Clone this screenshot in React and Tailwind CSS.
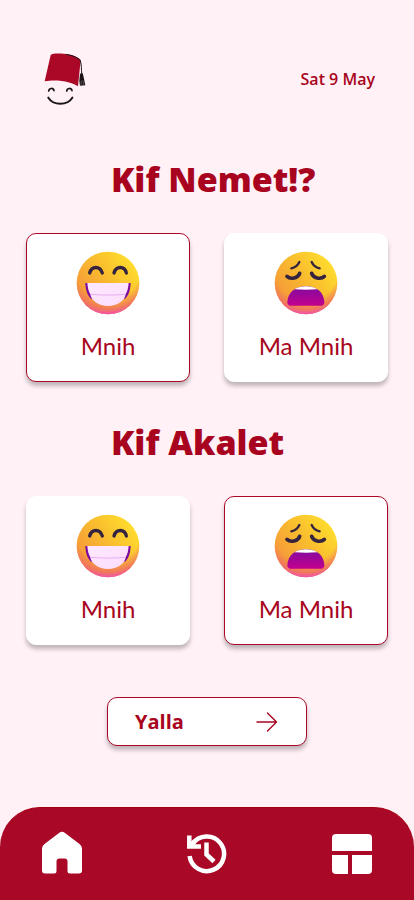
import React, { useState } from 'react';

const TarboushLogo = () => (
  <svg viewBox="36 30 132 174" className="w-11 h-[58px]" fill="none" role="img" aria-label="Smiling tarboush">
    <path d="M62 45 C66 40 84 40 101 41 C122 43 144 49 152 60 L144 139 C130 130 112 124 90 122 C72 120 56 122 44 124 Z" fill="#ab0828" />
    <path d="M108 43 C128 46 146 54 151 62 C155 76 154 88 155 101" stroke="#1c1517" strokeWidth="3" />
    <path d="M150 101 L158 99 L161 112 L166 136 L150 137 L148 122 Z" fill="#1c1517" />
    <path d="M154 122 L153 136 M159 121 L161 135" stroke="#8d8285" strokeWidth="1.5" />
    <path d="M56 153 C58 143 70 143 72 152 M110 153 C112 143 124 143 126 152" stroke="#1c1517" strokeWidth="5" strokeLinecap="round" />
    <path d="M55 173 C70 197 112 197 127 173" stroke="#1c1517" strokeWidth="6" strokeLinecap="round" />
  </svg>
);

const Face = ({ id, children }) => (
  <svg viewBox="0 0 192 192" className="w-16 h-16" fill="none" aria-hidden="true">
    <defs>
      <linearGradient id={`${id}-skin`} x1="0.9" y1="0.1" x2="0.1" y2="0.75">
        <stop offset="0" stopColor="#ffe02e" />
        <stop offset="0.5" stopColor="#f9bc2e" />
        <stop offset="1" stopColor="#f5973a" />
      </linearGradient>
      <radialGradient id={`${id}-blush`} cx="0.5" cy="0.25" r="0.75">
        <stop offset="0.7" stopColor="#ef6a6a" stopOpacity="0" />
        <stop offset="0.9" stopColor="#ef6a6a" stopOpacity="0.8" />
        <stop offset="1" stopColor="#f24fb5" />
      </radialGradient>
      <linearGradient id={`${id}-mouth`} x1="0" y1="0" x2="0" y2="1">
        <stop offset="0" stopColor="#7d0ba0" />
        <stop offset="1" stopColor="#c4008e" />
      </linearGradient>
      <linearGradient id={`${id}-teeth`} x1="0" y1="0" x2="1" y2="1">
        <stop offset="0" stopColor="#ffe9ff" />
        <stop offset="1" stopColor="#fbdcfd" />
      </linearGradient>
    </defs>
    <circle cx="96" cy="96" r="94" fill={`url(#${id}-skin)`} />
    <circle cx="96" cy="96" r="94" fill={`url(#${id}-blush)`} />
    {children}
  </svg>
);

const HappyFace = ({ id }) => (
  <Face id={id}>
    <path d="M41 66 C47 44 72 44 79 66 M114 66 C120 44 146 44 151 66" stroke="#35243f" strokeWidth="10" strokeLinecap="round" />
    <path d="M28 96 H164 C163 120 157 134 147 143 H45 C35 134 29 120 28 96 Z" fill="#7d0ba0" />
    <path d="M34 96 H158 C157 110 154 122 149 130 C146 150 124 165 96 165 C68 165 46 150 43 130 C38 122 35 110 34 96 Z" fill={`url(#${id}-teeth)`} />
    <path d="M44 130 C78 133 114 133 148 130" stroke="#e9aef0" strokeWidth="3" />
  </Face>
);

const WearyFace = ({ id }) => (
  <Face id={id}>
    <path d="M52 52 C62 50 72 42 76 33 M113 33 C117 42 127 50 137 52" stroke="#35243f" strokeWidth="7" strokeLinecap="round" />
    <path d="M39 76 C49 86 73 82 77 67 M113 67 C117 82 141 86 151 76" stroke="#35243f" strokeWidth="11" strokeLinecap="round" />
    <path d="M40 154 C41 124 64 106 96 106 C128 106 150 124 151 154 C151 161 147 164 141 164 L50 164 C44 164 40 161 40 154 Z" fill={`url(#${id}-mouth)`} />
    <path d="M62 115 C72 108 84 106 96 106 C108 106 120 108 130 115 C108 117 84 117 62 115 Z" fill="#fff" />
  </Face>
);

const MoodCard = ({ label, selected, onClick, children }) => (
  <button
    type="button"
    aria-pressed={selected}
    onClick={onClick}
    className={`flex-1 flex flex-col items-center pt-[17px] pb-[18px] gap-3.5 bg-white rounded-[10px] border shadow-[0_4px_4px_rgba(0,0,0,0.25)] cursor-pointer ${
      selected ? 'border-[#ab0828]' : 'border-white'
    }`}
  >
    {children}
    <span className="text-2xl leading-[34px] font-normal font-[Lato,sans-serif]">{label}</span>
  </button>
);

const MoodQuestion = ({ name, title, value, onChange }) => (
  <section className="flex flex-col gap-7">
    <h2 className="pl-[85px] text-[34px] leading-[48px] pb-0.5 font-extrabold whitespace-nowrap">
      {title}
    </h2>
    <div className="flex gap-[34px]">
      <MoodCard label="Mnih" selected={value === 'good'} onClick={() => onChange('good')}>
        <HappyFace id={`${name}-good`} />
      </MoodCard>
      <MoodCard label="Ma Mnih" selected={value === 'bad'} onClick={() => onChange('bad')}>
        <WearyFace id={`${name}-bad`} />
      </MoodCard>
    </div>
  </section>
);

const BottomNav = () => (
  <nav className="mt-auto bg-[#a90827] border-t border-[#a50010] rounded-t-[40px] px-[42px] pt-[23px] pb-[23px] flex justify-between text-white">
    <a href="#home" aria-label="Home">
      <svg viewBox="0 0 40 46" className="w-10 h-[46px]" fill="currentColor">
        <path d="M17 2 Q20 -0.4 23 2 L37.5 13 Q40 15 40 17.5 V39.5 Q40 42.5 37 42.5 H28 Q25.5 42.5 25.5 40 V30.5 Q25.5 27.5 22.5 27.5 H17.5 Q14.5 27.5 14.5 30.5 V40 Q14.5 42.5 12 42.5 H3 Q0 42.5 0 39.5 V17.5 Q0 15 2.5 13 Z" />
      </svg>
    </a>
    <a href="#history" aria-label="History">
      <svg viewBox="0 0 40 46" className="w-10 h-[46px]" fill="none" stroke="currentColor" strokeWidth="4.5">
        <path d="M5.5 13 A17.3 17.3 0 1 1 2.6 25" />
        <path d="M2.3 4.5 V15.5 H14" />
        <path d="M3 14.5 L8 10" />
        <path d="M19.5 11.5 V23.5 L27 30.5" />
      </svg>
    </a>
    <a href="#dashboard" aria-label="Dashboard">
      <svg viewBox="0 0 40 46" className="w-10 h-[46px]" fill="currentColor">
        <path d="M4 3 H36 Q40 3 40 7 V20 H0 V7 Q0 3 4 3 Z" />
        <path d="M0 24 H16 V43 H4 Q0 43 0 39 Z" />
        <path d="M20 24 H40 V39 Q40 43 36 43 H20 Z" />
      </svg>
    </a>
  </nav>
);

const App = () => {
  const [sleep, setSleep] = useState('good');
  const [food, setFood] = useState('bad');

  return (
    <div className="min-h-screen flex flex-col bg-[#fff1f6] text-[#a80420] font-['Open_Sans',sans-serif]">
      <header className="flex items-center justify-between pt-[50px] pl-[42px] pr-[39px]">
        <TarboushLogo />
        <time className="text-base leading-5 font-semibold">Sat 9 May</time>
      </header>

      <main className="flex flex-col px-[26px] pt-[47px] pb-8">
        <div className="flex flex-col gap-9">
          <MoodQuestion name="sleep" title="Kif Nemet!?" value={sleep} onChange={setSleep} />
          <MoodQuestion name="food" title="Kif Akalet" value={food} onChange={setFood} />
        </div>

        <button
          type="button"
          className="self-center mt-[52px] w-[200px] h-[49px] pl-[27px] pr-7 flex items-center justify-between bg-white border border-[#ab0828] rounded-[10px] shadow-[0_4px_4px_rgba(0,0,0,0.25)] cursor-pointer"
        >
          <span className="text-xl leading-7 font-bold">Yalla</span>
          <svg viewBox="0 0 22 20" className="w-[22px] h-5" fill="none" stroke="currentColor" strokeWidth="1.4" strokeLinecap="round" strokeLinejoin="round" aria-hidden="true">
            <path d="M1 10 H20.5 M11.5 1 L20.5 10 L11.5 19" />
          </svg>
        </button>
      </main>

      <BottomNav />
    </div>
  );
};

export default App;
